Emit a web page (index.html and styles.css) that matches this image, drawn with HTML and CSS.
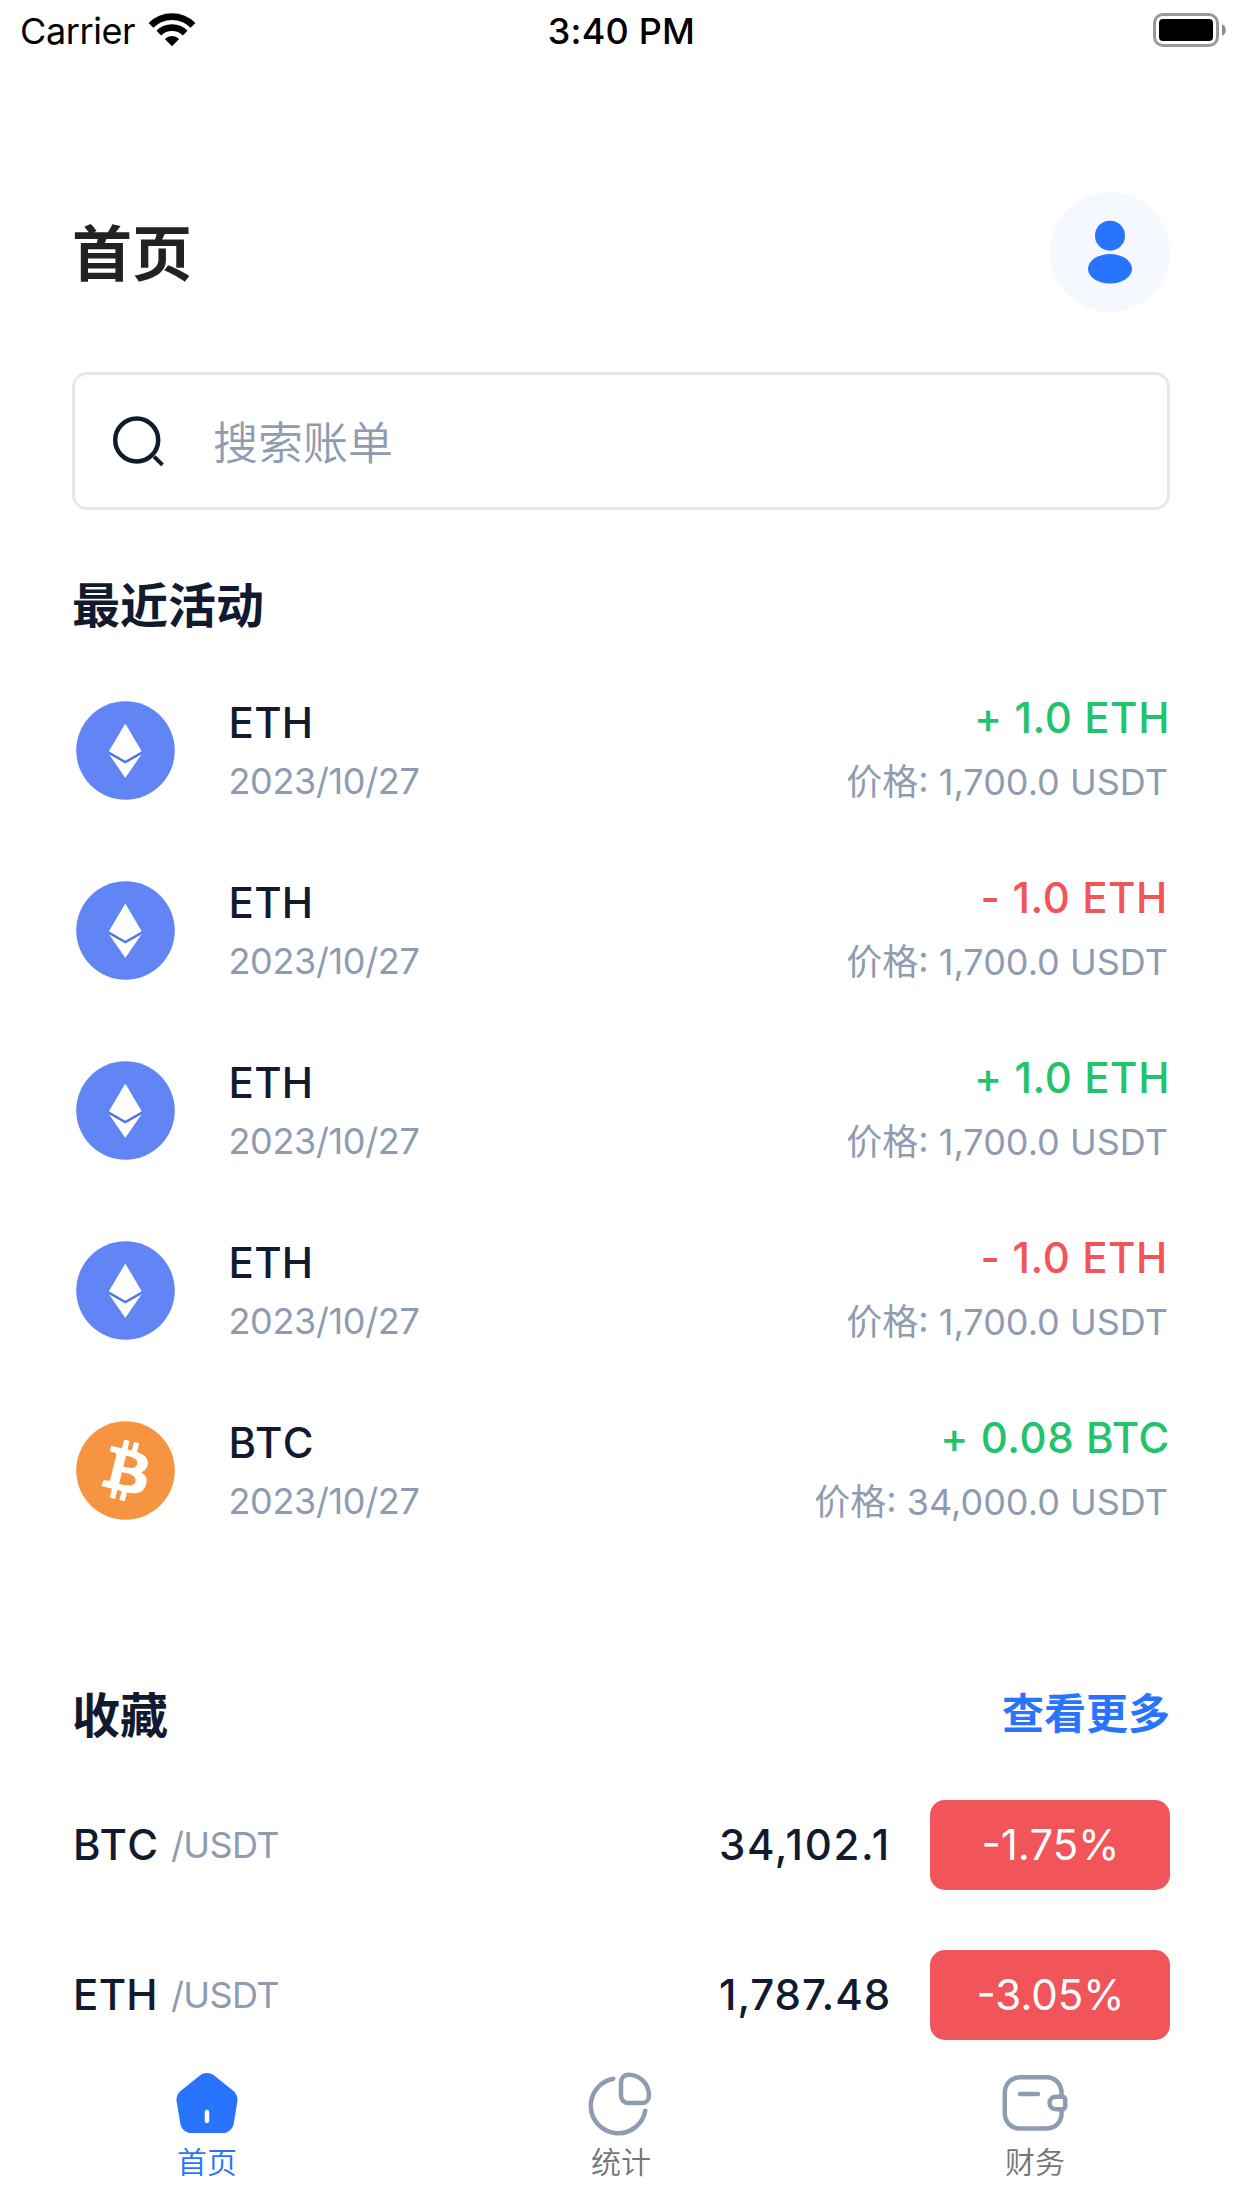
FILE: index.html
```
<!DOCTYPE html>
<html lang="zh-CN">
<head>
<meta charset="utf-8">
<title>首页</title>
<link rel="stylesheet" href="styles.css">
</head>
<body>
<svg class="sprite" width="0" height="0" aria-hidden="true">
  <symbol id="eth" viewBox="0 0 99 99">
    <circle cx="49.5" cy="49.5" r="49.3" fill="#6285f5"/>
    <path d="M49.3 21.8 66.6 50.6 49.3 78 32 50.6Z" fill="#4f74f0"/>
    <path d="M49.3 22.4 65.8 50.2 49.3 59.8 32.8 50.2Z" fill="#fff"/>
    <path d="M33 53.2 49.3 62.6 65.6 53.2 49.3 76.9Z" fill="#fff"/>
  </symbol>
  <symbol id="btc" viewBox="0 0 32 32">
    <circle cx="16" cy="16" r="15.94" fill="#f69441"/>
    <path fill="#fff" d="M23.189 14.02c.314-2.096-1.283-3.223-3.465-3.975l.708-2.84-1.728-.43-.69 2.765c-.454-.114-.92-.22-1.385-.326l.695-2.783L15.596 6l-.708 2.839c-.376-.086-.746-.17-1.104-.26l.002-.009-2.384-.595-.46 1.846s1.283.294 1.256.312c.7.175.826.638.805 1.006l-.806 3.235c.048.012.11.03.18.057l-.183-.045-1.13 4.532c-.086.212-.303.531-.793.41.018.025-1.256-.313-1.256-.313l-.858 1.978 2.25.561c.418.105.828.215 1.231.318l-.715 2.872 1.727.43.708-2.84c.472.127.93.245 1.378.357l-.706 2.828 1.728.43.715-2.866c2.948.558 5.164.333 6.097-2.333.752-2.146-.037-3.385-1.588-4.192 1.13-.26 1.98-1.003 2.207-2.538zm-3.95 5.538c-.533 2.147-4.148.986-5.32.695l.95-3.805c1.172.293 4.929.872 4.37 3.11zm.535-5.569c-.487 1.953-3.495.96-4.47.717l.86-3.45c.975.243 4.118.696 3.61 2.733z"/>
  </symbol>
</svg>

<div class="screen">
  <div class="status">
    <div class="carrier">
      <span>Carrier</span>
      <svg class="wifi" width="48" height="34" viewBox="0 0 48 34">
        <path d="M3 12.3A29.7 29.7 0 0 1 45 12.3M10.8 20.1A18.7 18.7 0 0 1 37.2 20.1" fill="none" stroke="#000" stroke-width="6.7"/>
        <path d="M24 33.3 16.8 26.1A10.2 10.2 0 0 1 31.2 26.1Z"/>
      </svg>
    </div>
    <div class="time">3:40 PM</div>
    <svg class="battery" width="73" height="34" viewBox="0 0 73 34">
      <rect x="1.5" y="1.5" width="63" height="31" rx="8.5" fill="none" stroke="#999" stroke-width="3"/>
      <rect x="6" y="6" width="54" height="22" rx="4"/>
      <path d="M69 11C74 13.5 74 20.5 69 23Z" fill="#8c8c8c"/>
    </svg>
  </div>

  <main class="content">
    <header class="header">
      <h1 class="title">首页</h1>
      <div class="avatar">
        <svg width="120" height="120" viewBox="0 0 120 120" fill="#2874ff">
          <circle cx="60" cy="43.7" r="15"/>
          <ellipse cx="60" cy="76.8" rx="22" ry="14.8"/>
        </svg>
      </div>
    </header>

    <div class="search">
      <svg width="54" height="54" viewBox="0 0 54 54" fill="none" stroke="#111a2e" stroke-width="4.5">
        <circle cx="25.7" cy="26" r="21.5"/>
        <path d="M44.5 44 50 49.5" stroke-linecap="square" stroke-width="4"/>
      </svg>
      <span class="placeholder">搜索账单</span>
    </div>

    <h2 class="section-title">最近活动</h2>
    <div class="activity">
      <div class="row">
        <svg class="coin"><use href="#eth"/></svg>
        <div class="info"><div class="symbol">ETH</div><div class="date">2023/10/27</div></div>
        <div class="amount"><div class="delta up">+ 1.0 ETH</div><div class="price">价格: 1,700.0 USDT</div></div>
      </div>
      <div class="row">
        <svg class="coin"><use href="#eth"/></svg>
        <div class="info"><div class="symbol">ETH</div><div class="date">2023/10/27</div></div>
        <div class="amount"><div class="delta down">- 1.0 ETH</div><div class="price">价格: 1,700.0 USDT</div></div>
      </div>
      <div class="row">
        <svg class="coin"><use href="#eth"/></svg>
        <div class="info"><div class="symbol">ETH</div><div class="date">2023/10/27</div></div>
        <div class="amount"><div class="delta up">+ 1.0 ETH</div><div class="price">价格: 1,700.0 USDT</div></div>
      </div>
      <div class="row">
        <svg class="coin"><use href="#eth"/></svg>
        <div class="info"><div class="symbol">ETH</div><div class="date">2023/10/27</div></div>
        <div class="amount"><div class="delta down">- 1.0 ETH</div><div class="price">价格: 1,700.0 USDT</div></div>
      </div>
      <div class="row">
        <svg class="coin"><use href="#btc"/></svg>
        <div class="info"><div class="symbol wide">BTC</div><div class="date">2023/10/27</div></div>
        <div class="amount"><div class="delta up">+ 0.08 BTC</div><div class="price">价格: 34,000.0 USDT</div></div>
      </div>
    </div>

    <div class="section-head">
      <h2 class="section-title">收藏</h2>
      <a class="more">查看更多</a>
    </div>
    <div class="favorites">
      <div class="pair">
        <span class="base wide">BTC</span><span class="quote">/USDT</span>
        <span class="last last-spaced">34,102.1</span><span class="badge">-1.75%</span>
      </div>
      <div class="pair">
        <span class="base">ETH</span><span class="quote">/USDT</span>
        <span class="last">1,787.48</span><span class="badge">-3.05%</span>
      </div>
    </div>
  </main>

  <nav class="tabs">
    <div class="tab active">
      <svg width="72" height="72" viewBox="0 0 24 24" fill="#2874ff"><path d="M20.83 8.01L14.28 2.77C13 1.75 11 1.74 9.73 2.76L3.18 8.01C2.24 8.76 1.67 10.26 1.87 11.44L3.13 18.98C3.42 20.67 4.99 22 6.7 22H17.3C18.99 22 20.59 20.64 20.88 18.97L22.14 11.43C22.32 10.26 21.75 8.76 20.83 8.01ZM12.75 18C12.75 18.41 12.41 18.75 12 18.75C11.59 18.75 11.25 18.41 11.25 18V15C11.25 14.59 11.59 14.25 12 14.25C12.41 14.25 12.75 14.59 12.75 15V18Z"/></svg>
      <span>首页</span>
    </div>
    <div class="tab">
      <svg width="72" height="72" viewBox="0 0 72 72" fill="none" stroke="#8e9bb1" stroke-width="4.5" stroke-linecap="round"><path d="M36 28V16C36 11 39 7.7 43.5 7.7C55 7.7 64 17 64 28.5C64 33 61 36 57 36H44C39 36 36 33 36 28ZM28.3 11.7A27.5 27.5 0 1 0 60.3 43.7"/></svg>
      <span>统计</span>
    </div>
    <div class="tab">
      <svg width="72" height="72" viewBox="0 0 72 72" fill="none" stroke="#8e9bb1" stroke-width="4.5" stroke-linecap="round"><path d="M62.6 29.5V27C62.6 17 56.5 10.3 47 10.3H21.5C12 10.3 5.8 17 5.8 26V46C5.8 55 12 61.6 21.5 61.6H47C56.5 61.6 62.6 55 62.6 46V42.5M21 26.9H39M57 29.7H63.5C65 29.7 66.2 31 66.2 32.5V39.3C66.2 41 65 42.2 63.5 42.2H57C53 42.2 50.6 39.5 50.6 36C50.6 32.3 53 29.7 57 29.7Z"/></svg>
      <span>财务</span>
    </div>
  </nav>
</div>
</body>
</html>
```
FILE: styles.css
```
* { box-sizing: border-box; }

body {
  margin: 0;
  background: #fff;
  color: #111a2e;
  font-family: Inter, "Noto Sans CJK SC", sans-serif;
}

h1, h2 { margin: 0; }
svg { display: block; flex: none; }
.sprite { position: absolute; }

.screen {
  display: flex;
  flex-direction: column;
  width: 1242px;
  height: 2208px;
  overflow: hidden;
}

/* Status bar */
.status {
  display: grid;
  grid-template-columns: 1fr auto 1fr;
  align-items: center;
  height: 62px;
  padding: 0 16px 0 20px;
  color: #000;
  font-size: 36px;
  line-height: 62px;
}
.carrier { display: flex; align-items: center; gap: 13px; letter-spacing: -.4px; }
.wifi { margin-bottom: 3px; }
.time { margin-right: 3px; font-weight: 500; letter-spacing: .2px; }
.battery { justify-self: end; margin-bottom: 2px; }

.content { flex: 1; padding: 130px 72px 0; }

.header {
  display: flex;
  align-items: center;
  justify-content: space-between;
  height: 120px;
}
.title { padding-top: 3px; color: #222; font-size: 60px; font-weight: 600; line-height: 84px; }
.avatar { border-radius: 50%; background: #f5f8ff; }

.search {
  display: flex;
  align-items: center;
  gap: 48px;
  height: 138px;
  margin-top: 60px;
  padding: 0 36px;
  border: 3px solid #e1e8f1;
  border-radius: 15px;
}
.placeholder { padding-top: 5px; color: #8e9bb1; font-size: 45px; font-weight: 350; line-height: 62px; }

.section-title { font-size: 48px; font-weight: 600; line-height: 68px; }
.search + .section-title { margin: 62px 0 20px; }

/* Recent activity */
.row { display: flex; align-items: center; height: 180px; }
.coin { width: 99px; height: 99px; margin: 0 0 0 4px; }
.info { margin: 4px 0 0 53.5px; line-height: 59px; }
.symbol, .base { font-size: 42px; font-weight: 550; letter-spacing: .3px; }
.symbol.wide, .base.wide { letter-spacing: 1.4px; }
.date { font-size: 36px; color: #8e9bb1; letter-spacing: -.35px; }
.amount { margin-left: auto; text-align: right; line-height: 65px; }
.delta { font-size: 42px; font-weight: 550; letter-spacing: .6px; line-height: 64px; }
.up { color: #23c36b; }
.down { padding-right: 2px; color: #f15459; }
.price { padding-right: 2px; font-size: 36px; font-weight: 400; color: #8e9bb1; }

/* Favorites */
.section-head {
  display: flex;
  align-items: center;
  justify-content: space-between;
  margin: 122px 0 50px;
}
.more { padding-bottom: 4px; color: #2874ff; font-size: 42px; font-weight: 600; line-height: 60px; }
.favorites { display: grid; gap: 60px; }
.pair { display: flex; align-items: center; height: 90px; line-height: 50px; }
.base { width: 99px; padding-left: 1px; }
.quote { font-size: 36px; color: #8e9bb1; letter-spacing: -.6px; }
.base, .quote, .last { padding-bottom: 1px; }
.last { margin-left: auto; font-size: 42px; font-weight: 550; letter-spacing: .9px; }
.last-spaced { letter-spacing: 1.7px; }
.badge {
  width: 240px;
  height: 90px;
  margin-left: 39px;
  padding-left: 1px;
  border-radius: 15px;
  background: #f15459;
  color: #fff;
  font-size: 42px;
  line-height: 90px;
  text-align: center;
}

/* Bottom tabs */
.tabs {
  display: grid;
  grid-template-columns: repeat(3, 414px);
  flex: none;
  height: 168px;
  padding-top: 27px;
  background: #fff;
  box-shadow: 0 -1px 5px rgba(0, 0, 0, .015);
}
.tab {
  display: flex;
  flex-direction: column;
  align-items: center;
  color: #757575;
  font-size: 30px;
  font-weight: 350;
  line-height: 46px;
}
.active { color: #2874ff; }
```
